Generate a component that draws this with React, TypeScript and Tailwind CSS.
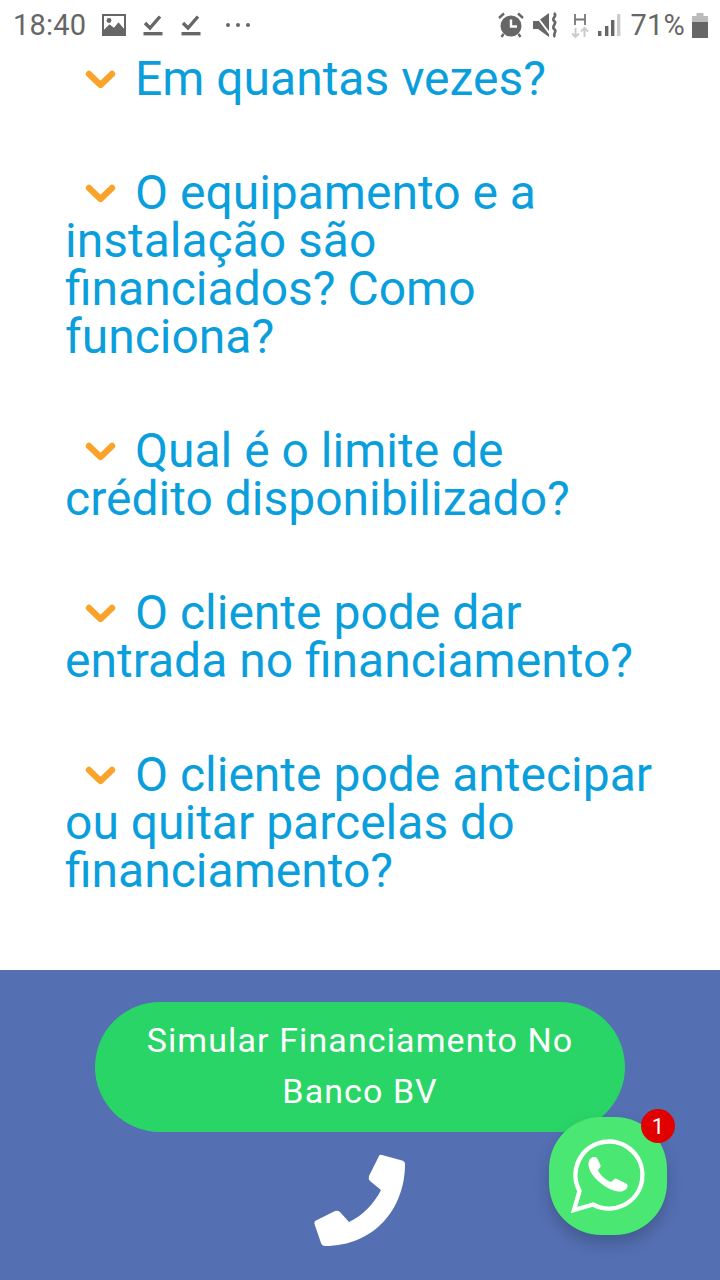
const questions = [
    'Em quantas vezes?',
    'O equipamento e a instalação são financiados? Como funciona?',
    'Qual é o limite de crédito disponibilizado?',
    'O cliente pode dar entrada no financiamento?',
    'O cliente pode antecipar ou quitar parcelas do financiamento?',
];

function Chevron() {
    return (
        <svg width="32" height="20" viewBox="0 0 32 20" className="inline-block mr-[19px] ml-[19px] align-[5px]">
            <path d="M5 4 L16.5 15 L28 4" fill="none" stroke="#f9a32a" strokeWidth="6.4" strokeLinecap="round" strokeLinejoin="round" />
        </svg>
    );
}

function TaskIcon() {
    return (
        <svg width="20" height="24" viewBox="0 0 20 24">
            <path d="M2 10 L7 15 L17 3.5" fill="none" stroke="#666" strokeWidth="3.4" />
            <rect x="0.5" y="19" width="19" height="3.4" fill="#666" />
        </svg>
    );
}

function StatusBar() {
    return (
        <div className="h-[50px] flex items-center justify-between pl-[13px] pr-[12px] text-[#666] text-[29px] tracking-[0.2px] leading-none">
            <div className="flex items-center">
                <span>18:40</span>
                <svg width="24" height="24" viewBox="0 0 24 24" className="ml-[16px]">
                    <path fillRule="evenodd" d="M0 1 H24 V23 H0 Z M2 3 V17 L7.5 11.5 L12 15 L16.5 9.5 L22 16 V3 Z" fill="#666" />
                    <path d="M2 17 L7.5 11.5 L12 15 L16.5 9.5 L22 16 V23 H2 Z" fill="#666" />
                    <circle cx="7" cy="7.5" r="2.4" fill="#666" />
                </svg>
                <div className="ml-[17px]"><TaskIcon /></div>
                <div className="ml-[18px]"><TaskIcon /></div>
                <div className="ml-[25px] flex gap-[6px]">
                    <span className="w-[4px] h-[4px] rounded-full bg-[#666]" />
                    <span className="w-[4px] h-[4px] rounded-full bg-[#666]" />
                    <span className="w-[4px] h-[4px] rounded-full bg-[#666]" />
                </div>
            </div>
            <div className="flex items-center">
                <svg width="26" height="26" viewBox="0 0 26 26">
                    <path d="M1 6 L6 1.5 M25 6 L20 1.5 M5.5 22 L3.5 25 M20.5 22 L22.5 25" stroke="#666" strokeWidth="2.4" fill="none" />
                    <circle cx="13" cy="14" r="10.5" fill="#666" />
                    <path d="M13 7.5 V14.5 H19" stroke="#fff" strokeWidth="2.4" fill="none" />
                </svg>
                <svg width="26" height="26" viewBox="0 0 26 26" className="ml-[9px]">
                    <path d="M0 9 H5 L16 1 V25 L5 17 H0 Z" fill="#666" />
                    <path d="M1 1 L17 22" stroke="#fff" strokeWidth="2" />
                    <path d="M21 1 C25 4 18 6 21 9 C25 11 18 14 21 17 C25 19 19 22 22 25" stroke="#666" strokeWidth="2.6" fill="none" />
                </svg>
                <svg width="20" height="26" viewBox="0 0 20 26" className="ml-[11px]">
                    <path d="M5 2 V13 M15 2 V13 M5 7.5 H15" stroke="#777" strokeWidth="1.8" fill="none" />
                    <path d="M5.5 16 V25 M2 21.5 L5.5 25 L9 21.5" stroke="#ccc" strokeWidth="2" fill="none" />
                    <path d="M14.5 25 V16 M11 19.5 L14.5 16 L18 19.5" stroke="#ccc" strokeWidth="2" fill="none" />
                </svg>
                <svg width="24" height="24" viewBox="0 0 24 24" className="ml-[7px]">
                    <rect x="1" y="18" width="3.4" height="5" fill="#666" />
                    <rect x="8" y="13" width="3.4" height="10" fill="#666" />
                    <rect x="14" y="7" width="3.4" height="16" fill="#666" />
                    <rect x="20" y="1" width="3.4" height="22" fill="#ccc" />
                </svg>
                <span className="ml-[10px]">71%</span>
                <svg width="16" height="25" viewBox="0 0 16 25" className="ml-[7px]">
                    <rect x="4.5" y="0" width="7" height="3" fill="#bbb" />
                    <rect x="0" y="3" width="16" height="6" fill="#bbb" />
                    <rect x="0" y="9" width="16" height="16" fill="#666" />
                </svg>
            </div>
        </div>
    );
}

function WhatsappGlyph() {
    return (
        <svg width="76" height="76" viewBox="0 0 76 76">
            {/* anel com a ponta do balao */}
            <path d="M4 72 L9.5 53 A33.5 33.5 0 1 1 23 66.5 Z" fill="none" stroke="#fff" strokeWidth="4.4" strokeLinejoin="miter" />
            {/* fone */}
            <path d="M21 20 C23 18.5 26 18.5 27 20 L30.5 27 C31 28.5 30 30 28 32 C28.5 35 35 42 41 44 C43 42.5 44.5 40.5 46 40.5 L56 45.5 C58 46.5 58 48 57 50 C55 53 51 54 48 53.5 C39 52 28 45 22 36 C18 30 17 24 21 20 Z" fill="#fff" />
        </svg>
    );
}

export default function App() {
    return (
        <div className="w-[720px] h-[1280px] bg-white overflow-hidden relative flex flex-col font-['Roboto',sans-serif]">
            <StatusBar />

            {/* Perguntas */}
            <div className="flex-1 pt-[5px] pl-[65px] pr-[65px] flex flex-col gap-[66px]">
                {questions.map((q) => (
                    <p key={q} className="text-[#0a9fdc] text-[48px] leading-[48px]">
                        <Chevron />{q}
                    </p>
                ))}
            </div>

            {/* Rodape */}
            <div className="h-[310px] bg-[#5470b3] pt-[32px] flex flex-col items-center">
                <button className="w-[530px] h-[130px] rounded-[65px] bg-[#2ad567] text-white text-[34px] leading-[51px] tracking-[1.1px] px-[40px] pb-[2px]">
                    Simular Financiamento No Banco BV
                </button>
                <svg width="92" height="92" viewBox="0 0 92 92" className="mt-[22px]">
                    <path d="M65 2 Q66 0 68 1 L88 6.5 Q91 7.5 91 10 C91 55 60 92 11 92 Q8 92 7 89 L0.5 70 Q0 67 2 66.5 L21 57 Q24 56 26 58 L35 68 C48 62 60 50 67 36 L56 27 Q54 25 55 22 Z" fill="#fff" />
                </svg>
            </div>

            {/* WhatsApp */}
            <div className="absolute left-[549px] top-[1117px] w-[118px] h-[118px] rounded-[52px] bg-[#4ae873] shadow-[0_8px_16px_rgba(0,0,0,0.2)] flex items-center justify-center">
                <WhatsappGlyph />
                <span className="absolute left-[92px] top-[-8px] w-[34px] h-[34px] rounded-full bg-[#e00000] text-white text-[22px] flex items-center justify-center">1</span>
            </div>
        </div>
    );
}
